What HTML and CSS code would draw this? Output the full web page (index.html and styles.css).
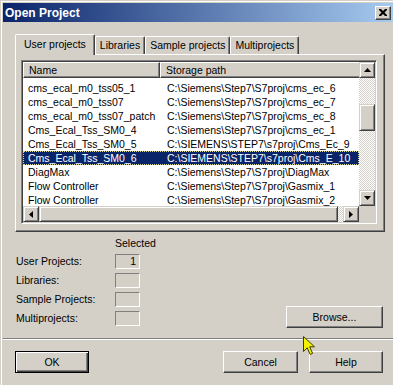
FILE: index.html
```html
<!DOCTYPE html>
<html lang="en">
<head>
    <meta charset="UTF-8">
    <meta name="viewport" content="width=device-width, initial-scale=1.0">
    <title>Open Project</title>
    <link rel="stylesheet" href="styles.css">
</head>
<body>

    <div class="window">
        <div class="titlebar">
            <span class="title">Open Project</span>
            <button class="close" type="button">
                <svg width="8" height="7" viewBox="0 0 8 7"><path d="M0 0h2l2 2 2-2h2v1L5.5 3.5 8 6v1H6L4 5 2 7H0V6l2.5-2.5L0 1z" fill="#000"/></svg>
            </button>
        </div>

        <div class="main">
            <div class="tabs">
                <div class="tab active">User projects</div>
                <div class="tab">Libraries</div>
                <div class="tab">Sample projects</div>
                <div class="tab">Multiprojects</div>
            </div>

            <div class="panel">
                <div class="listview">
                    <div class="view">
                        <div class="header">
                            <div class="hcol name">Name</div>
                            <div class="hcol path">Storage path</div>
                        </div>
                        <div class="rows">
                            <div class="row"><span class="name">cms_ecal_m0_tss05_1</span><span class="path">C:\Siemens\Step7\S7proj\cms_ec_6</span></div>
                            <div class="row"><span class="name">cms_ecal_m0_tss07</span><span class="path">C:\Siemens\Step7\S7proj\cms_ec_7</span></div>
                            <div class="row"><span class="name">cms_ecal_m0_tss07_patch</span><span class="path">C:\Siemens\Step7\S7proj\cms_ec_8</span></div>
                            <div class="row"><span class="name">Cms_Ecal_Tss_SM0_4</span><span class="path">C:\Siemens\Step7\S7proj\cms_ec_1</span></div>
                            <div class="row"><span class="name">Cms_Ecal_Tss_SM0_5</span><span class="path">C:\SIEMENS\STEP7\s7proj\Cms_Ec_9</span></div>
                            <div class="row selected"><span class="name">Cms_Ecal_Tss_SM0_6</span><span class="path">C:\SIEMENS\STEP7\s7proj\Cms_E_10</span></div>
                            <div class="row"><span class="name">DiagMax</span><span class="path">C:\Siemens\Step7\S7proj\DiagMax</span></div>
                            <div class="row"><span class="name">Flow Controller</span><span class="path">C:\Siemens\Step7\S7proj\Gasmix_1</span></div>
                            <div class="row"><span class="name">Flow Controller</span><span class="path">C:\Siemens\Step7\S7proj\Gasmix_2</span></div>
                        </div>
                    </div>

                    <div class="vscroll">
                        <div class="sbtn"><svg width="7" height="4" viewBox="0 0 7 4"><path d="M3.5 0L7 4H0z"/></svg></div>
                        <div class="track"><div class="thumb vthumb"></div></div>
                        <div class="sbtn"><svg width="7" height="4" viewBox="0 0 7 4"><path d="M0 0h7L3.5 4z"/></svg></div>
                    </div>

                    <div class="hscroll">
                        <div class="sbtn"><svg width="4" height="7" viewBox="0 0 4 7"><path d="M0 3.5L4 0v7z"/></svg></div>
                        <div class="track"><div class="thumb hthumb"></div></div>
                        <div class="sbtn"><svg width="4" height="7" viewBox="0 0 4 7"><path d="M0 0l4 3.5L0 7z"/></svg></div>
                    </div>

                    <div class="corner"></div>
                </div>
            </div>

            <div class="summary">
                <div class="counts">
                    <span class="heading">Selected</span>
                    <span class="label">User Projects:</span>
                    <span class="count">1</span>
                    <span class="label">Libraries:</span>
                    <span class="count"></span>
                    <span class="label">Sample Projects:</span>
                    <span class="count"></span>
                    <span class="label">Multiprojects:</span>
                    <span class="count"></span>
                </div>
                <button class="btn browse" type="button">Browse...</button>
            </div>
        </div>

        <div class="separator"></div>

        <div class="actions">
            <button class="btn default" type="button">OK</button>
            <button class="btn cancel" type="button">Cancel</button>
            <button class="btn" type="button">Help</button>
        </div>
    </div>

    <!-- mouse pointer over the dialog -->
    <svg class="cursor" width="13" height="20" viewBox="0 0 13 20">
        <path d="M0.5 0.5L0.5 15.5L4.2 11.8L7.2 18.5L9.6 17.4L6.7 10.8L11.5 10.8Z" fill="#f2f200" stroke="#3c3c00" stroke-width="1"/>
    </svg>

</body>
</html>
```

FILE: styles.css
```css
* {
    box-sizing: border-box;
}

body {
    margin: 0;
    width: 393px;
    height: 385px;
    overflow: hidden;
    position: relative;
    background-color: #d4d0c8;
    font-family: "Liberation Sans", Arial, sans-serif;
    font-size: 10.5px;
    color: #000;
}

button {
    font-family: inherit;
    font-size: inherit;
    color: inherit;
    padding: 0;
    margin: 0;
}

.window {
    width: 393px;
    height: 385px;
    border-top: 1px solid #d4d0c8;
    border-left: 1px solid #d4d0c8;
    box-shadow: inset 1px 1px #fff;
    padding: 2px 0 0 2px;
}

/* title bar */
.titlebar {
    height: 19px;
    display: flex;
    align-items: center;
    justify-content: space-between;
    padding: 0 2px;
    background: linear-gradient(to right, #0a246a, #a6caf0);
}

.title {
    color: #fff;
    font-weight: bold;
    font-size: 12px;
}

.close {
    width: 16px;
    height: 14px;
    display: flex;
    align-items: center;
    justify-content: center;
    background-color: #d4d0c8;
    border: 1px solid;
    border-color: #fff #404040 #404040 #fff;
    box-shadow: inset -1px -1px #808080;
}

/* tabs */
.main {
    padding: 12px 8px 0 12px;
}

.tabs {
    display: flex;
    align-items: flex-end;
    height: 20px;
}

.tab {
    height: 18px;
    line-height: 16px;
    padding: 0 4px;
    border: 1px solid;
    border-bottom: none;
    border-color: #fff #404040 #fff #fff;
    border-radius: 2px 2px 0 0;
    box-shadow: inset -1px 0 #808080;
    white-space: nowrap;
}

.tab.active {
    height: 21px;
    line-height: 19px;
    margin-bottom: -1px;
    padding: 0 8px;
    position: relative;
    z-index: 1;
    background-color: #d4d0c8;
}

.panel {
    width: 370px;
    height: 178px;
    padding: 5px;
    border: 1px solid;
    border-color: #fff #404040 #404040 #fff;
    box-shadow: inset -1px -1px #808080;
}

/* list view */
.listview {
    width: 356px;
    height: 164px;
    padding: 1px;
    background-color: #fff;
    border: 1px solid;
    border-color: #808080 #fff #fff #808080;
    box-shadow: inset 1px 1px #404040, inset -1px -1px #d4d0c8;
    display: grid;
    grid-template-columns: 336px 16px;
    grid-template-rows: 144px 16px;
}

.view {
    overflow: hidden;
}

.header {
    display: flex;
    height: 16px;
}

.hcol {
    height: 16px;
    line-height: 14px;
    padding-left: 5px;
    background-color: #d4d0c8;
    border: 1px solid;
    border-color: #fff #404040 #404040 #fff;
    box-shadow: inset -1px -1px #808080;
    white-space: nowrap;
}

.hcol.name {
    width: 137px;
    flex-shrink: 0;
}

.hcol.path {
    width: 240px;
    flex-shrink: 0;
}

.rows {
    padding-top: 3px;
}

.row {
    display: flex;
    height: 14px;
    line-height: 14px;
    padding: 0 2px;
    white-space: nowrap;
}

.row .name {
    width: 135px;
    flex-shrink: 0;
    padding-left: 3px;
}

.row .path {
    padding-left: 7px;
}

.row.selected {
    background-color: #0a246a;
    color: #fff;
    outline: 1px dotted #d8d890;
    outline-offset: -1px;
}

/* scroll bars */
.sbtn {
    width: 16px;
    height: 16px;
    flex-shrink: 0;
    display: flex;
    align-items: center;
    justify-content: center;
    background-color: #d4d0c8;
    border: 1px solid;
    border-color: #d4d0c8 #404040 #404040 #d4d0c8;
    box-shadow: inset 1px 1px #fff, inset -1px -1px #808080;
}

.track {
    flex: 1;
    background: repeating-conic-gradient(#d4d0c8 0% 25%, #fff 0% 50%) 0 0 / 2px 2px;
}

.thumb {
    background-color: #d4d0c8;
    border: 1px solid;
    border-color: #d4d0c8 #404040 #404040 #d4d0c8;
    box-shadow: inset 1px 1px #fff, inset -1px -1px #808080;
}

.vscroll {
    display: flex;
    flex-direction: column;
}

.vthumb {
    margin-top: 26px;
    height: 27px;
}

.hscroll {
    display: flex;
}

.hthumb {
    width: 299px;
    height: 16px;
}

.corner {
    background-color: #d4d0c8;
}

/* selected counts */
.summary {
    display: flex;
    align-items: flex-end;
    padding-top: 5px;
    margin-right: 2px;
}

.counts {
    display: grid;
    grid-template-columns: 100px 25px;
    row-gap: 4px;
    align-items: center;
}

.heading {
    grid-column: 2;
    line-height: 13px;
    white-space: nowrap;
}

.label {
    padding-left: 1px;
    line-height: 15px;
    white-space: nowrap;
}

.count {
    height: 15px;
    line-height: 13px;
    padding-right: 3px;
    text-align: right;
    border: 1px solid;
    border-color: #808080 #fff #fff #808080;
}

/* push buttons */
.btn {
    height: 22px;
    width: 74px;
    background-color: #d4d0c8;
    border: 1px solid;
    border-color: #fff #404040 #404040 #fff;
    box-shadow: inset -1px -1px #808080;
    text-align: center;
}

.btn.browse {
    width: 97px;
    margin-left: auto;
    margin-bottom: -2px;
}

.btn.default {
    border-color: #000;
    box-shadow: inset 1px 1px #fff, inset -1px -1px #404040, inset -2px -2px #808080;
}

.btn.cancel {
    width: 75px;
    margin-left: auto;
}

.separator {
    margin-top: 12px;
    height: 2px;
    border-top: 1px solid #808080;
    border-bottom: 1px solid #fff;
}

.actions {
    display: flex;
    gap: 11px;
    margin-top: 11px;
    padding: 0 10px 0 12px;
}

.cursor {
    position: absolute;
    left: 303px;
    top: 336px;
}
```
